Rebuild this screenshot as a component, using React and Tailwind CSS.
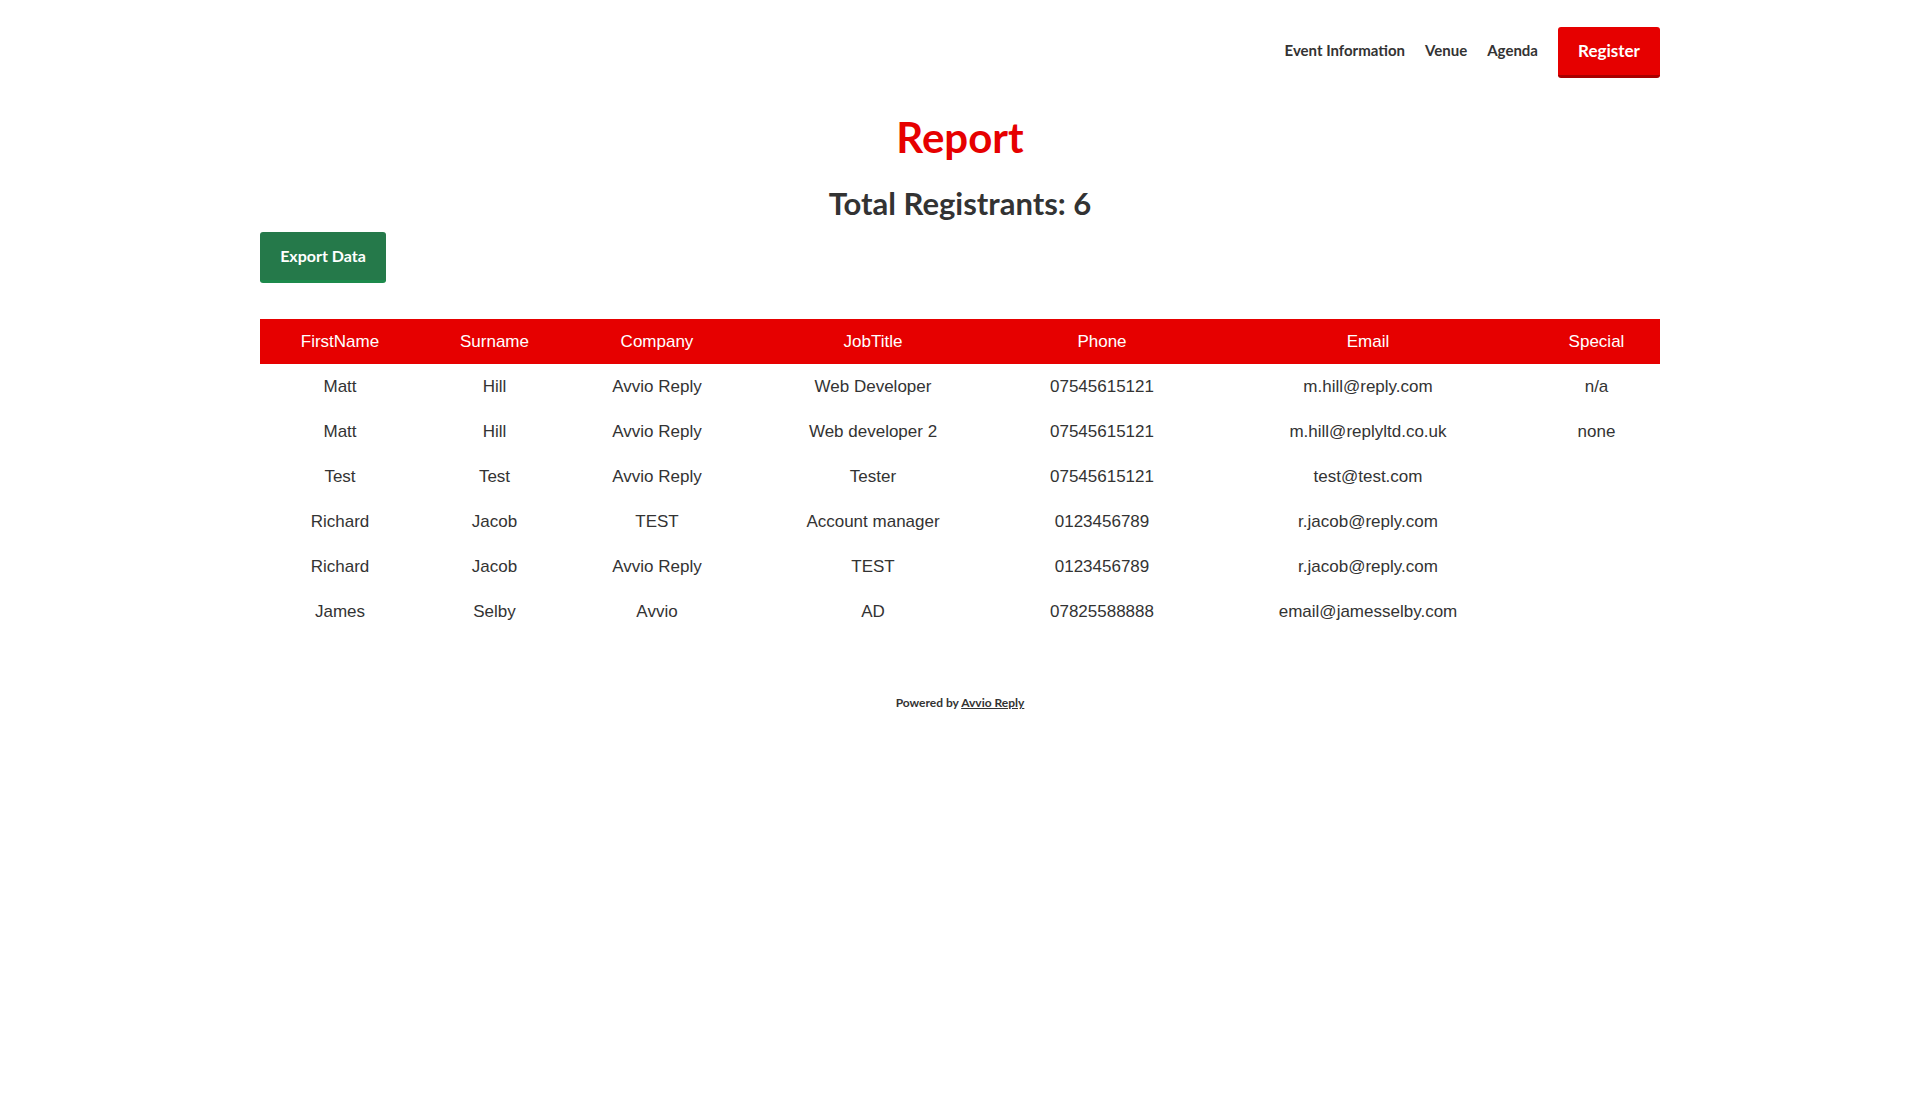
import React from "react";

const registrants = [
  { first: "Matt", last: "Hill", company: "Avvio Reply", job: "Web Developer", phone: "07545615121", email: "m.hill@reply.com", special: "n/a" },
  { first: "Matt", last: "Hill", company: "Avvio Reply", job: "Web developer 2", phone: "07545615121", email: "m.hill@replyltd.co.uk", special: "none" },
  { first: "Test", last: "Test", company: "Avvio Reply", job: "Tester", phone: "07545615121", email: "test@test.com", special: "" },
  { first: "Richard", last: "Jacob", company: "TEST", job: "Account manager", phone: "0123456789", email: "r.jacob@reply.com", special: "" },
  { first: "Richard", last: "Jacob", company: "Avvio Reply", job: "TEST", phone: "0123456789", email: "r.jacob@reply.com", special: "" },
  { first: "James", last: "Selby", company: "Avvio", job: "AD", phone: "07825588888", email: "email@jamesselby.com", special: "" },
];

const headings = ["FirstName", "Surname", "Company", "JobTitle", "Phone", "Email", "Special"];

const App = () => {
  return (
    <div className="min-h-screen bg-white text-[#333] font-['Lato',sans-serif]">
      <div className="mx-auto w-[1400px]">
        {/* Header nav */}
        <header className="flex justify-end items-center pt-[27px]">
          <nav className="flex items-center gap-[20px] pb-[4px] text-[15px] font-bold text-[#333]">
            <a href="#">Event Information</a>
            <a href="#">Venue</a>
            <a href="#">Agenda</a>
          </nav>
          <button className="ml-[20px] h-[51px] w-[102px] rounded-[3px] bg-[#e60000] border-b-[3px] border-[#a80000] text-white text-[17px] font-bold">
            Register
          </button>
        </header>

        {/* Title */}
        <h1 className="mt-[35px] text-center text-[42px] leading-[48px] font-bold text-[#e60000]">Report</h1>
        <h2 className="mt-[23px] text-center text-[31px] leading-[38px] font-bold text-[#333]">Total Registrants: 6</h2>

        <button className="mt-[10px] h-[51px] w-[126px] rounded-[3px] bg-[#25794a] border-b-[3px] border-[#1d8a4c] text-white text-[16px] font-bold">
          Export Data
        </button>

        {/* Registrants table */}
        <table className="mt-[36px] w-full table-fixed border-collapse font-['Liberation_Sans',Arial,sans-serif] text-[17px]">
          <colgroup>
            <col className="w-[160px]" />
            <col className="w-[149px]" />
            <col className="w-[176px]" />
            <col className="w-[256px]" />
            <col className="w-[202px]" />
            <col className="w-[330px]" />
            <col className="w-[127px]" />
          </colgroup>
          <thead>
            <tr className="bg-[#e60000] text-white h-[45px]">
              {headings.map((h) => (
                <th key={h} className="font-normal text-center">{h}</th>
              ))}
            </tr>
          </thead>
          <tbody>
            {registrants.map((r, i) => (
              <tr key={i} className="h-[45px] text-[#333]">
                <td className="text-center">{r.first}</td>
                <td className="text-center">{r.last}</td>
                <td className="text-center">{r.company}</td>
                <td className="text-center">{r.job}</td>
                <td className="text-center">{r.phone}</td>
                <td className="text-center">{r.email}</td>
                <td className="text-center">{r.special}</td>
              </tr>
            ))}
          </tbody>
        </table>

        {/* Footer */}
        <footer className="mt-[60px] text-center text-[12px] font-bold text-[#333]">
          Powered by <a href="#" className="underline">Avvio Reply</a>
        </footer>
      </div>
    </div>
  );
};

export default App;
